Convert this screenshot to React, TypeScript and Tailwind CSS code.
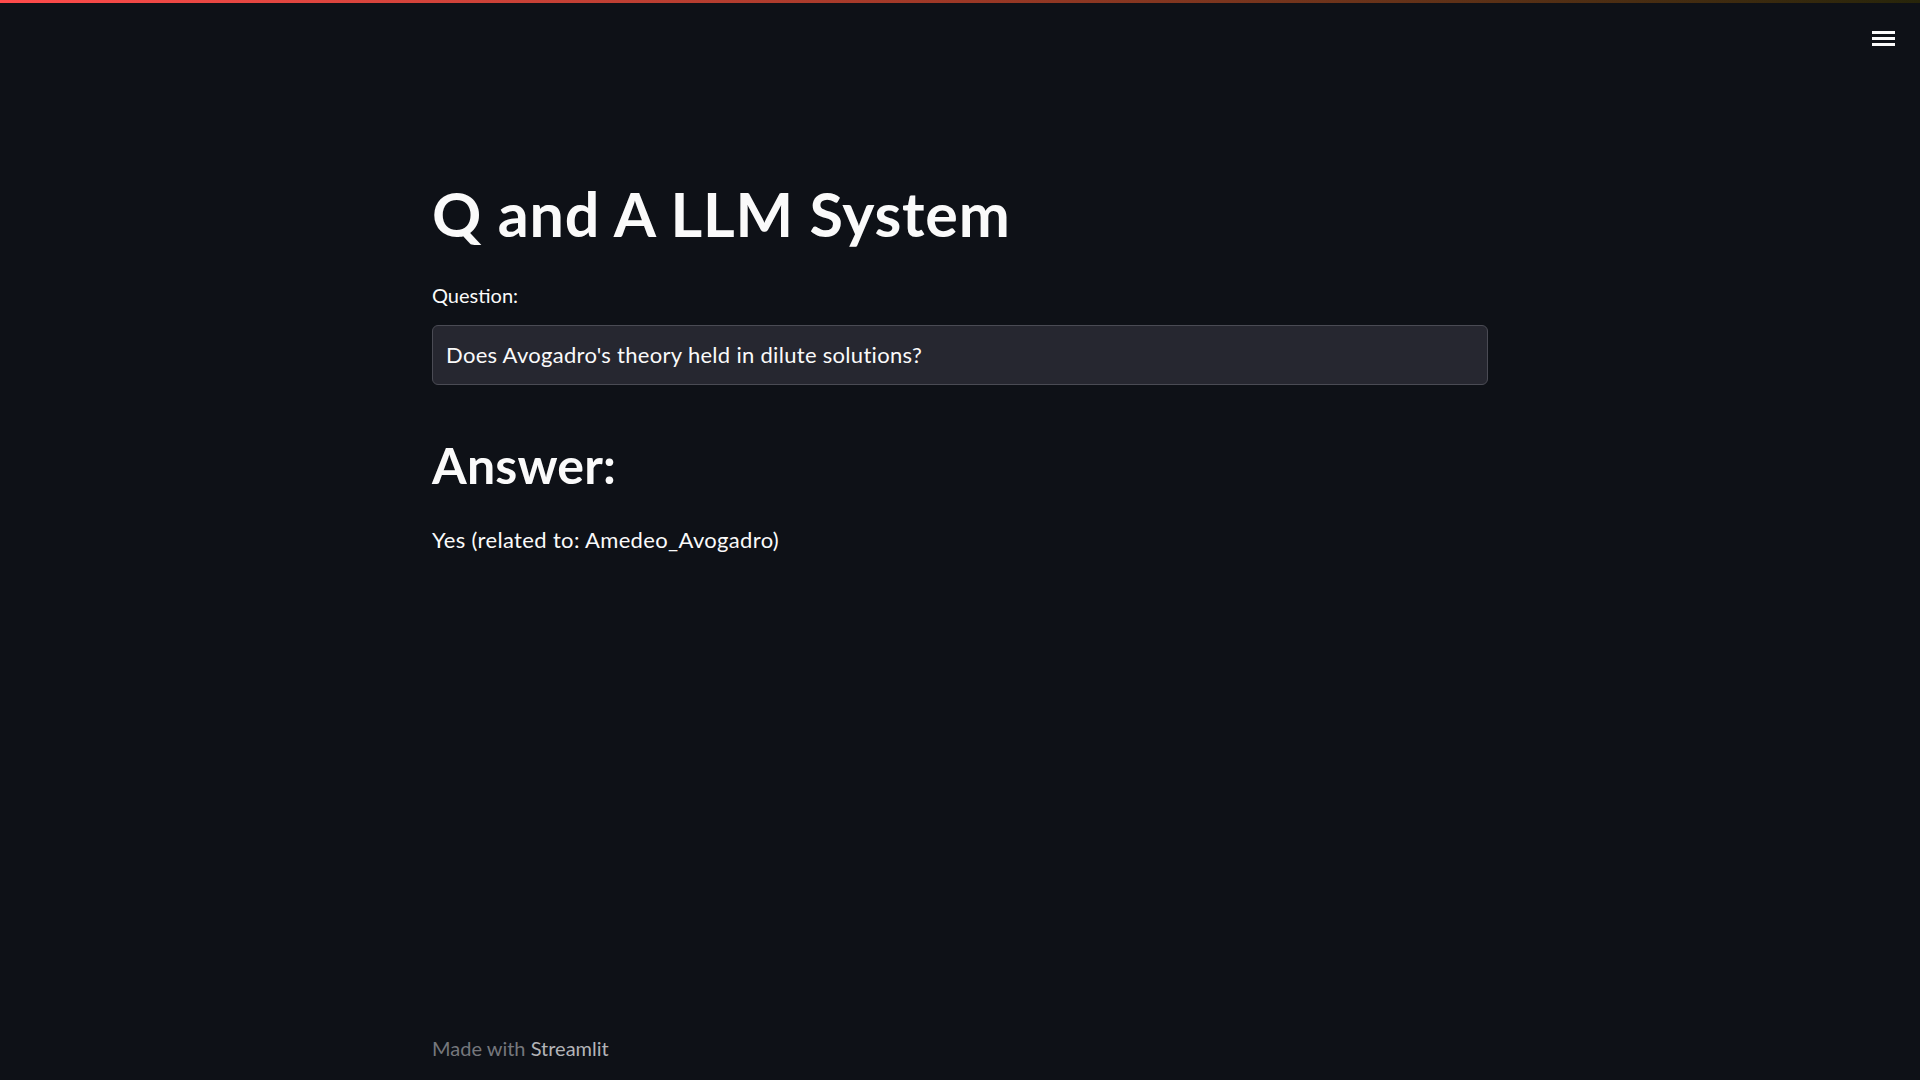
export default function App() {
  return (
    <div className="relative flex min-h-screen flex-col bg-[#0e1117] text-[#fafafa] font-['Lato','Noto_Sans',sans-serif]">
      <div className="h-[3px] w-full bg-gradient-to-r from-[#ff4b4b] via-[#9c3826] to-[#27250a]" />

      {/* header menu */}
      <button className="absolute right-[25px] top-[31px] flex w-[23px] flex-col gap-[3.5px]">
        <span className="block h-[2.5px] w-full bg-[#fafafa]" />
        <span className="block h-[2.5px] w-full bg-[#fafafa]" />
        <span className="block h-[2.5px] w-full bg-[#fafafa]" />
      </button>

      <main className="mx-auto w-[1056px] pt-[175px]">
        <h1 className="text-[61px] font-bold leading-[72px] tracking-[0.8px]">Q and A LLM System</h1>

        <label className="mt-[33px] block text-[20px] leading-[24px]">Question:</label>
        <div className="mt-[18px] flex h-[60px] items-center rounded-[6px] border border-[#4a4b54] bg-[#262730] px-[13px]">
          <span className="text-[22px] leading-[26px] tracking-[0.3px]">Does Avogadro's theory held in dilute solutions?</span>
        </div>

        <h2 className="mt-[51px] text-[50px] font-bold leading-[59px] tracking-[0.2px]">Answer:</h2>
        <p className="mt-[32px] text-[22px] leading-[26px] tracking-[0.35px]">Yes (related to: Amedeo_Avogadro)</p>
      </main>

      <footer className="mx-auto mt-auto w-[1056px] pb-[20px] text-[20px] leading-[24px] text-[#75777c]">
        Made with <span className="text-[#b3b4b8]">Streamlit</span>
      </footer>
    </div>
  );
}
